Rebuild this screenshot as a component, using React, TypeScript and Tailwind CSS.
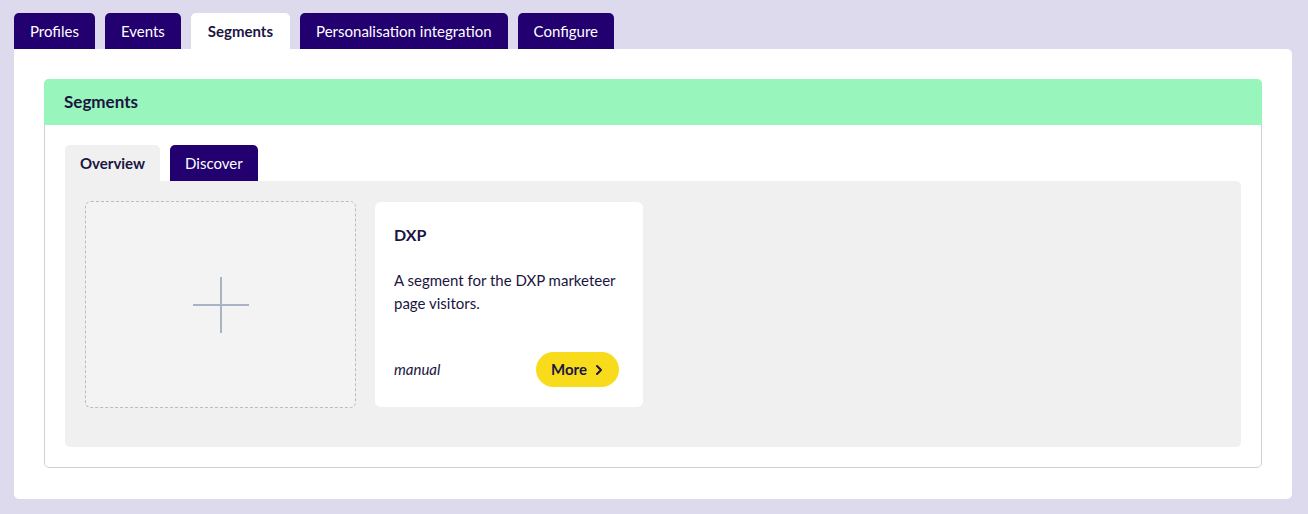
import { ChevronRight } from "lucide-react"

const topTabs = ["Profiles", "Events", "Segments", "Personalisation integration", "Configure"]

function TopTab({ label, active }: { label: string; active: boolean }) {
  return (
    <div
      className={
        active
          ? "h-[36px] px-[17px] flex items-center rounded-t-[5px] bg-white text-[#1b1542] font-bold text-[15px]"
          : "h-[36px] px-[16px] flex items-center rounded-t-[5px] bg-[#22006f] text-white text-[15px]"
      }
    >
      {label}
    </div>
  )
}

function AddCard() {
  return (
    <div className="w-[271px] h-[207px] rounded-[6px] border border-dashed border-[#b9bcc6] bg-[#f3f3f4] flex items-center justify-center">
      <svg width="58" height="58" viewBox="0 0 58 58" fill="none">
        <path d="M29 1v56M1 29h56" stroke="#a9b3c4" strokeWidth="2" />
      </svg>
    </div>
  )
}

function SegmentCard() {
  return (
    <div className="w-[268px] h-[205px] mt-px rounded-[6px] bg-white flex flex-col pl-[19px] pr-[24px] pt-[21px] pb-[20px]">
      <div className="text-[16px] leading-6 font-bold text-[#1b1542]">DXP</div>
      <p className="mt-[22px] text-[15px] leading-[23px] text-[#1b1542]">
        A segment for the DXP marketeer page visitors.
      </p>
      <div className="mt-auto flex items-center justify-between">
        <span className="italic text-[15px] text-[#1b1542]">manual</span>
        <button className="h-[35px] pl-[15px] pr-[12px] rounded-full bg-[#f8dc1c] flex items-center gap-[4px] text-[15px] font-bold text-[#1b1542]">
          More
          <ChevronRight size={16} strokeWidth={3} />
        </button>
      </div>
    </div>
  )
}

export default function App() {
  return (
    <div
      className="min-h-[514px] bg-[#dedaee] pt-[13px] pl-[14px] pr-[16px] pb-[15px]"
      style={{ fontFamily: "Lato, 'Noto Sans', sans-serif" }}
    >
      <div className="flex gap-[10px]">
        {topTabs.map((t) => (
          <TopTab key={t} label={t} active={t === "Segments"} />
        ))}
      </div>
      <div className="bg-white rounded-b-[5px] rounded-tr-[5px] pt-[30px] px-[30px] pb-[31px]">
        <div className="border border-[#cfcfd4] rounded-[5px]">
          <div className="h-[46px] -mx-px -mt-px bg-[#98f6bd] rounded-t-[5px] flex items-center px-[20px]">
            <h2 className="text-[17px] font-bold text-[#1b1542]">Segments</h2>
          </div>
          <div className="pt-[20px] px-[20px] pb-[20px]">
            <div className="flex gap-[10px]">
              <div className="h-[36px] px-[15px] flex items-center rounded-t-[5px] bg-[#f0f0f0] text-[15px] font-bold text-[#1b1542]">
                Overview
              </div>
              <div className="h-[36px] px-[15px] flex items-center rounded-t-[5px] bg-[#22006f] text-[15px] text-white">
                Discover
              </div>
            </div>
            <div className="bg-[#f0f0f0] rounded-b-[5px] rounded-tr-[5px] h-[266px] p-[20px] flex items-start gap-[19px]">
              <AddCard />
              <SegmentCard />
            </div>
          </div>
        </div>
      </div>
    </div>
  )
}
